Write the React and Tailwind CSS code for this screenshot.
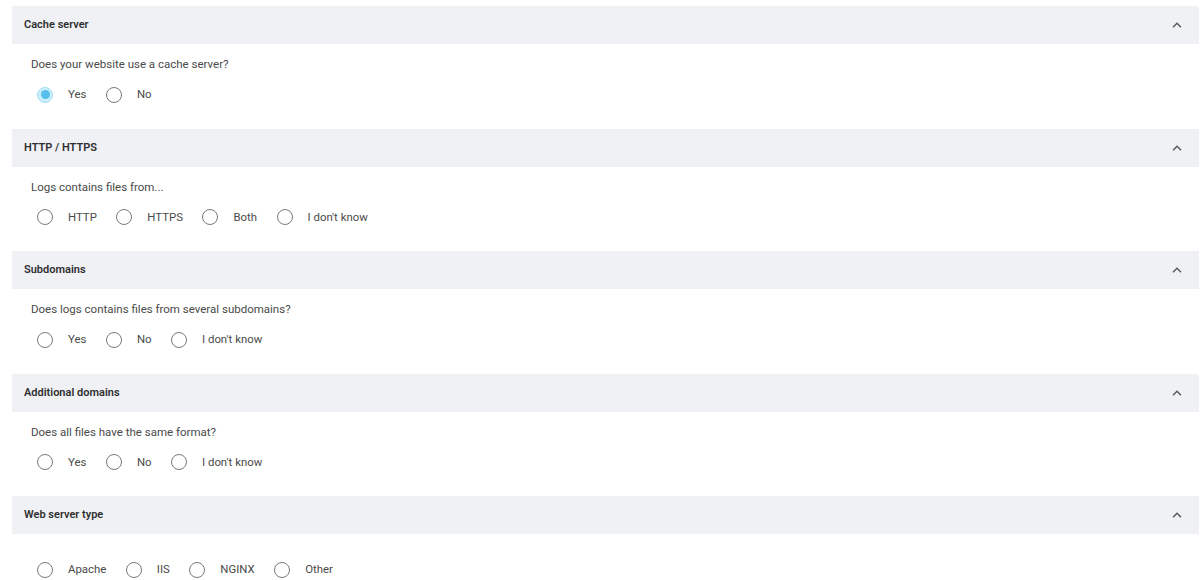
import React from "react";

const sections = [
  { title: "Cache server", question: "Does your website use a cache server?", options: ["Yes", "No"], checked: 0 },
  { title: "HTTP / HTTPS", question: "Logs contains files from...", options: ["HTTP", "HTTPS", "Both", "I don't know"] },
  { title: "Subdomains", question: "Does logs contains files from several subdomains?", options: ["Yes", "No", "I don't know"] },
  { title: "Additional domains", question: "Does all files have the same format?", options: ["Yes", "No", "I don't know"] },
  { title: "Web server type", question: null, options: ["Apache", "IIS", "NGINX", "Other"] },
];

function Radio({ checked }) {
  if (checked) {
    return (
      <span className="w-4 h-4 rounded-full bg-[#cdeefb] border border-[#9fdcf4] flex items-center justify-center shrink-0">
        <span className="w-[9px] h-[9px] rounded-full bg-[#55c0ec]" />
      </span>
    );
  }
  return <span className="w-4 h-4 rounded-full border border-[#7a7a7a] bg-white shrink-0" />;
}

function Chevron() {
  return (
    <svg width="10" height="6" viewBox="0 0 10 6" className="text-[#555]">
      <path d="M1 5.2 L5 1.2 L9 5.2" fill="none" stroke="currentColor" strokeWidth="1.4" />
    </svg>
  );
}

export default function App() {
  return (
    <div className="w-[1200px] h-[580px] bg-white overflow-hidden pt-[6px] pl-3 pr-px" style={{ fontFamily: "Roboto, 'Liberation Sans', sans-serif" }}>
      {sections.map((s, i) => (
        <div key={i} className="h-[122.5px]">
          <div className="h-[38px] bg-[#eff1f5] flex items-center justify-between pl-3 pr-[17px]">
            <span className="text-[11px] font-semibold text-[#2f2f2f] pt-px">{s.title}</span>
            <Chevron />
          </div>
          <div className={s.question ? "pt-3 pl-[19px]" : "pt-[26px] pl-[19px]"}>
            {s.question && (
              <div className="h-4 leading-4 text-[11.5px] text-[#4a4a4a] mb-[13px]">{s.question}</div>
            )}
            <div className="h-5 flex items-center pl-[6px]">
              {s.options.map((o, j) => (
                <label key={j} className="flex items-center mr-[19.5px]">
                  <Radio checked={s.checked === j} />
                  <span className="ml-[15px] text-[11.4px] text-[#4a4a4a]">{o}</span>
                </label>
              ))}
            </div>
          </div>
        </div>
      ))}
    </div>
  );
}
